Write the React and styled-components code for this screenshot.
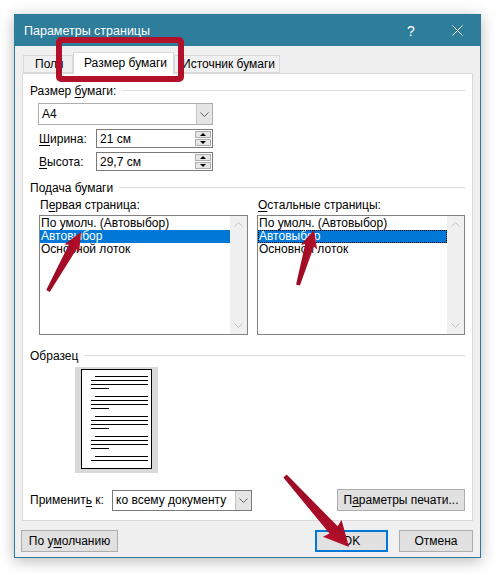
import React from "react"
import styled, { createGlobalStyle } from "styled-components"

const GlobalStyle = createGlobalStyle`
  html, body {
    margin: 0;
    padding: 0;
    background: #ffffff;
  }
  body {
    font-family: "Liberation Sans", Arial, sans-serif;
    font-size: 12px;
    color: #000;
  }
  * { box-sizing: border-box; }
`

const Stage = styled.div`
  position: relative;
  width: 495px;
  height: 573px;
  padding: 14px 0 0 14px;
  overflow: hidden;
`

const Window = styled.div`
  width: 467px;
  height: 544px;
  border: 1px solid #2b7a97;
  background: #f0f0f0;
  box-shadow: 0 3px 14px rgba(0, 0, 0, 0.28);
  display: flex;
  flex-direction: column;
`

const TitleBar = styled.div`
  flex: none;
  height: 31px;
  background: #2e7d9a;
  color: #fff;
  display: flex;
  align-items: center;
  padding-left: 9px;
  font-size: 12.5px;
`

const TitleText = styled.div`
  flex: 1;
`

const TitleButton = styled.div`
  width: 46px;
  height: 31px;
  display: flex;
  align-items: center;
  justify-content: center;
  font-size: 14px;
`

const Body = styled.div`
  flex: 1;
  display: flex;
  flex-direction: column;
  padding: 6px 7px 5px 7px;
`

const TabStrip = styled.div`
  display: flex;
  align-items: flex-end;
  height: 21px;
  padding-left: 1px;
  position: relative;
  z-index: 1;
`

const Tab = styled.div`
  width: ${p => p.w}px;
  height: ${p => (p.active ? 22 : 18)}px;
  margin-bottom: ${p => (p.active ? -1 : 0)}px;
  border: 1px solid #d9d9d9;
  border-bottom: ${p => (p.active ? "none" : "1px solid #d9d9d9")};
  background: ${p => (p.active ? "#fff" : "#f0f0f0")};
  display: flex;
  align-items: center;
  padding-left: ${p => p.pl}px;
  padding-bottom: ${p => (p.active ? 2 : 0)}px;
  white-space: nowrap;
  overflow: hidden;
`

const Panel = styled.div`
  flex: none;
  height: 448px;
  border: 1px solid #d9d9d9;
  background: #fff;
  padding: 9px 7px 0 7px;
  display: flex;
  flex-direction: column;
`

const GroupHeader = styled.div`
  display: flex;
  align-items: center;
  gap: 6px;
  height: 15px;
  margin-top: ${p => p.mt || 0}px;
  white-space: nowrap;

  &::after {
    content: "";
    flex: 1;
    height: 1px;
    background: #dcdcdc;
  }
`

const U = styled.span`
  text-decoration: underline;
  text-underline-offset: 2px;
`

const Select = styled.div`
  display: flex;
  width: ${p => p.w}px;
  height: ${p => p.h}px;
  margin-left: ${p => p.ml || 0}px;
  margin-top: ${p => p.mt || 0}px;
  border: 1px solid ${p => p.border};
  background: #fff;
`

const SelectValue = styled.div`
  flex: 1;
  display: flex;
  align-items: center;
  padding-left: 3px;
  white-space: nowrap;
`

const SelectArrow = styled.div`
  width: 16px;
  background: #e5e5e5;
  border-left: 1px solid #c4c4c4;
  display: flex;
  align-items: center;
  justify-content: center;
`

const FieldRow = styled.div`
  display: flex;
  align-items: center;
  margin-left: 9px;
  margin-top: 4px;
  height: 19px;
`

const FieldLabel = styled.div`
  width: ${p => p.w}px;
  white-space: nowrap;
`

const SpinBox = styled.div`
  display: flex;
  width: 117px;
  height: 19px;
  border: 1px solid #7a7a7a;
`

const SpinValue = styled.div`
  flex: 1;
  display: flex;
  align-items: center;
  padding-left: 3px;
`

const SpinButtons = styled.div`
  width: 17px;
  display: flex;
  flex-direction: column;
  gap: 1px;
  padding: 1px 1px 1px 0;
`

const SpinButton = styled.div`
  flex: 1;
  background: #e6e6e6;
  border: 1px solid #adadad;
  display: flex;
  align-items: center;
  justify-content: center;
`

const Tri = styled.div`
  width: 0;
  height: 0;
  border-left: 3px solid transparent;
  border-right: 3px solid transparent;
  ${p => (p.down ? "border-top: 3px solid #000;" : "border-bottom: 3px solid #000;")}
`

const Columns = styled.div`
  display: grid;
  grid-template-columns: 209px 208px;
  column-gap: 9px;
  margin-left: 9px;
  margin-top: 3px;
`

const ColLabel = styled.div`
  height: 14px;
  line-height: 14px;
  margin-bottom: 3px;
  padding-left: 1px;
`

const ListBox = styled.div`
  height: 120px;
  border: 1px solid #828282;
  display: flex;
`

const ListItems = styled.div`
  flex: 1;
  padding-top: 1px;
`

const ListItem = styled.div`
  height: 13px;
  line-height: 13px;
  padding-left: 1px;
  white-space: nowrap;
  background: ${p => (p.selected ? "#0078d7" : "transparent")};
  color: ${p => (p.selected ? "#fff" : "#000")};
  outline: ${p => (p.focused ? "1px dotted #000" : "none")};
  outline-offset: -1px;
`

const ScrollBar = styled.div`
  width: 17px;
  background: #f0f0f0;
  display: flex;
  flex-direction: column;
  justify-content: space-between;
  align-items: center;
  padding: 6px 0 6px;
`

const SampleBox = styled.div`
  width: 83px;
  height: 106px;
  margin-left: 45px;
  margin-top: 4px;
  background: #d9d9d9;
  padding: 2px 6px 4px 6px;
`

const SamplePage = styled.div`
  width: 100%;
  height: 100%;
  background: #fff;
  border: 1px solid #000;
`

const ApplyRow = styled.div`
  display: flex;
  align-items: center;
  justify-content: space-between;
  margin-top: 16px;
  height: 22px;
`

const ApplyGroup = styled.div`
  display: flex;
  align-items: center;
`

const Button = styled.div`
  width: ${p => p.w}px;
  height: 22px;
  background: #e1e1e1;
  border: ${p => (p.primary ? "2px solid #0078d7" : "1px solid #adadad")};
  display: flex;
  align-items: center;
  justify-content: center;
  white-space: nowrap;
`

const ButtonRow = styled.div`
  display: flex;
  align-items: center;
  margin-top: 9px;
  margin-left: -1px;
  gap: 11px;

  & > :first-child {
    margin-right: auto;
  }
`

const Highlight = styled.div`
  position: absolute;
  left: 56px;
  top: 37px;
  width: 128px;
  height: 45px;
  border: 6px solid #b3102c;
  border-radius: 5px;
  pointer-events: none;
  z-index: 5;
`

const Overlay = styled.svg`
  position: absolute;
  left: 0;
  top: 0;
  pointer-events: none;
  z-index: 6;
`

function Chevron({ up, color = "#606060" }) {
  return (
    <svg width="9" height="5" viewBox="0 0 9 5">
      <path d={up ? "M0.5 4.5 L4.5 0.5 L8.5 4.5" : "M0.5 0.5 L4.5 4.5 L8.5 0.5"} fill="none" stroke={color} strokeWidth="1" />
    </svg>
  )
}

function Arrow({ from, to, head, half, t1, t2 }) {
  const dx = to[0] - from[0]
  const dy = to[1] - from[1]
  const len = Math.hypot(dx, dy)
  const angle = (Math.atan2(dy, dx) * 180) / Math.PI
  const b = len - head
  const d = `M0 ${-t1} L${b} ${-t2} L${b - 2} ${-half} L${len} 0 L${b - 2} ${half} L${b} ${t2} L0 ${t1} Z`
  return (
    <g transform={`translate(${from[0]} ${from[1]}) rotate(${angle})`}>
      <path d={d} fill="url(#arrowFill)" />
    </g>
  )
}

function PageLines() {
  const groups = [0, 1, 2, 3, 4]
  return (
    <svg width="69" height="98" viewBox="0 0 69 98">
      {groups.map(g => {
        const y = 6.5 + g * 20
        return (
          <g key={g} stroke="#000" strokeWidth="1">
            <line x1="13" y1={y} x2="66" y2={y} />
            <line x1="9" y1={y + 4} x2="66" y2={y + 4} />
            {g < 4 && <line x1="9" y1={y + 8} x2="66" y2={y + 8} />}
            {g < 4 && <line x1="9" y1={y + 12} x2="27" y2={y + 12} />}
          </g>
        )
      })}
    </svg>
  )
}

function List({ items, selected, focused }) {
  return (
    <ListBox>
      <ListItems>
        {items.map((it, i) => (
          <ListItem key={it} selected={i === selected} focused={focused && i === selected}>
            {it}
          </ListItem>
        ))}
      </ListItems>
      <ScrollBar>
        <Chevron up color="#c2c2c2" />
        <Chevron color="#c2c2c2" />
      </ScrollBar>
    </ListBox>
  )
}

const trays = ["По умолч. (Автовыбор)", "Автовыбор", "Основной лоток"]

export default function App() {
  return (
    <Stage>
      <GlobalStyle />
      <Window>
        <TitleBar>
          <TitleText>Параметры страницы</TitleText>
          <TitleButton>?</TitleButton>
          <TitleButton>
            <svg width="11" height="11" viewBox="0 0 11 11">
              <path d="M0.5 0.5 L10.5 10.5 M10.5 0.5 L0.5 10.5" stroke="#fff" strokeWidth="1" />
            </svg>
          </TitleButton>
        </TitleBar>
        <Body>
          <TabStrip>
            <Tab w={50} pl={11}>Поля</Tab>
            <Tab w={101} pl={10} active>Размер бумаги</Tab>
            <Tab w={106} pl={7}>Источник бумаги</Tab>
          </TabStrip>
          <Panel>
            <GroupHeader>
              <span>Размер <U>б</U>умаги:</span>
            </GroupHeader>
            <Select w={175} h={22} ml={8} mt={5} border="#adadad">
              <SelectValue>A4</SelectValue>
              <SelectArrow>
                <Chevron />
              </SelectArrow>
            </Select>
            <FieldRow>
              <FieldLabel w={57}><U>Ш</U>ирина:</FieldLabel>
              <SpinBox>
                <SpinValue>21 см</SpinValue>
                <SpinButtons>
                  <SpinButton><Tri /></SpinButton>
                  <SpinButton><Tri down /></SpinButton>
                </SpinButtons>
              </SpinBox>
            </FieldRow>
            <FieldRow>
              <FieldLabel w={57}><U>В</U>ысота:</FieldLabel>
              <SpinBox>
                <SpinValue>29,7 см</SpinValue>
                <SpinButtons>
                  <SpinButton><Tri /></SpinButton>
                  <SpinButton><Tri down /></SpinButton>
                </SpinButtons>
              </SpinBox>
            </FieldRow>

            <GroupHeader mt={9}>
              <span>Подача бумаги</span>
            </GroupHeader>
            <Columns>
              <div>
                <ColLabel>П<U>е</U>рвая страница:</ColLabel>
                <List items={trays} selected={1} />
              </div>
              <div>
                <ColLabel><U>О</U>стальные страницы:</ColLabel>
                <List items={trays} selected={1} focused />
              </div>
            </Columns>

            <GroupHeader mt={13}>
              <span>Образец</span>
            </GroupHeader>
            <SampleBox>
              <SamplePage>
                <PageLines />
              </SamplePage>
            </SampleBox>

            <ApplyRow>
              <ApplyGroup>
                <FieldLabel w={82}>Применит<U>ь</U> к:</FieldLabel>
                <Select w={140} h={21} border="#7a7a7a">
                  <SelectValue>ко всему документу</SelectValue>
                  <SelectArrow>
                    <Chevron />
                  </SelectArrow>
                </Select>
              </ApplyGroup>
              <Button w={128}>П<U>а</U>раметры печати...</Button>
            </ApplyRow>
          </Panel>
          <ButtonRow>
            <Button w={97}>По у<U>м</U>олчанию</Button>
            <Button w={73} primary>OK</Button>
            <Button w={74}>Отмена</Button>
          </ButtonRow>
        </Body>
      </Window>

      <Highlight />
      <Overlay width="495" height="573" viewBox="0 0 495 573">
        <defs>
          <linearGradient id="arrowFill" x1="0" y1="0" x2="1" y2="1">
            <stop offset="0" stopColor="#8e0a20" />
            <stop offset="1" stopColor="#bd0f2d" />
          </linearGradient>
        </defs>
        <Arrow from={[48, 291]} to={[81, 232]} head={17} half={8.5} t1={2} t2={4.5} />
        <Arrow from={[298, 285]} to={[314, 230]} head={16} half={8.5} t1={2} t2={4.5} />
        <Arrow from={[285, 476]} to={[349, 547]} head={23} half={12.5} t1={2.2} t2={5.5} />
      </Overlay>
    </Stage>
  )
}
